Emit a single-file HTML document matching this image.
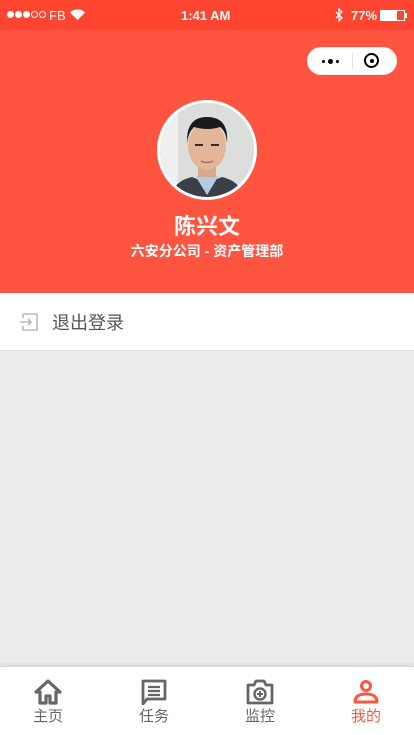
<!DOCTYPE html>
<html><head><meta charset="utf-8"><style>
*{margin:0;padding:0;box-sizing:border-box}
body{width:414px;height:735px;overflow:hidden;background:#ececec;font-family:"Liberation Sans","Noto Sans CJK SC",sans-serif;position:relative}
.status{position:absolute;top:0;left:0;width:414px;height:30px;background:#ff4530;color:#fff;font-size:13px;font-weight:bold}
.header{position:absolute;top:30px;left:0;width:414px;height:263px;background:#ff5540}
.capsule{position:absolute;left:307px;top:17px;width:90px;height:28px;border-radius:14px;background:#fff;border:1px solid #f0f0f0}
.avatar{position:absolute;left:157px;top:100px;width:100px;height:100px;border-radius:50%;border:3px solid #fff;overflow:hidden;background:#d9dbd8}
.name{position:absolute;top:209px;width:414px;text-align:center;color:#fff;font-size:22px;font-weight:bold}
.dept{position:absolute;top:241px;width:414px;text-align:center;color:#fff;font-size:14px;font-weight:bold}
.row{position:absolute;top:293px;left:0;width:414px;height:58px;background:#fff;border-bottom:1px solid #ddd}
.row span{position:absolute;left:52px;top:16px;font-size:18px;color:#555}
.tab{position:absolute;top:666px;left:0;width:414px;height:69px;background:#fff;border-top:1px solid #d8d8d8;box-shadow:0 -2px 3px rgba(0,0,0,.08)}
.ti{position:absolute;top:12px;width:60px;text-align:center;font-size:15px;color:#666}
.ti svg{display:block;margin:0 auto 0}
</style></head><body>
<div class="status">
 <div style="position:absolute;left:7px;top:11px;display:flex;gap:1px">
  <i style="width:7px;height:7px;border-radius:50%;background:#fff"></i><i style="width:7px;height:7px;border-radius:50%;background:#fff"></i><i style="width:7px;height:7px;border-radius:50%;background:#fff"></i><i style="width:7px;height:7px;border-radius:50%;border:1px solid #fff"></i><i style="width:7px;height:7px;border-radius:50%;border:1px solid #fff"></i>
 </div>
 <span style="position:absolute;left:49px;top:8px;font-weight:normal">FB</span>
 <svg style="position:absolute;left:70px;top:9px" width="15" height="11" viewBox="0 0 15 11"><path d="M7.5 11L0 3.5A10.5 10.5 0 0 1 15 3.5Z" fill="#fff"/></svg>
 <span style="position:absolute;left:181px;top:8px">1:41 AM</span>
 <svg style="position:absolute;left:335px;top:8px" width="9" height="14" viewBox="0 0 9 14"><path d="M1 4l6 6-3 3V1l3 3-6 6" fill="none" stroke="#fff" stroke-width="1.3"/></svg>
 <span style="position:absolute;left:351px;top:8px">77%</span>
 <div style="position:absolute;left:380px;top:10px;width:25px;height:11px;border:1px solid #fff"><div style="width:16px;height:9px;background:#fff"></div></div>
 <div style="position:absolute;left:405px;top:13px;width:2px;height:5px;background:#fff"></div>
</div>
<div class="header">
 <div class="capsule">
  <div style="position:absolute;left:14px;top:11px;display:flex;gap:3px;align-items:center"><i style="width:3px;height:3px;border-radius:50%;background:#000"></i><i style="width:5px;height:5px;border-radius:50%;background:#000"></i><i style="width:3px;height:3px;border-radius:50%;background:#000"></i></div>
  <div style="position:absolute;left:44px;top:5px;width:1px;height:17px;background:#e5e5e5"></div>
  <div style="position:absolute;left:56px;top:5px;width:15px;height:15px;border-radius:50%;border:2px solid #000"><div style="position:absolute;left:3.5px;top:3.5px;width:4px;height:4px;border-radius:50%;background:#000"></div></div>
 </div>
</div>
<div class="avatar">
 <svg width="94" height="94" viewBox="0 0 94 94">
  <rect width="94" height="94" fill="#dcdedb"/>
  <rect x="0" y="0" width="18" height="94" fill="#eef0ee"/>
  <path d="M10 94Q14 78 32 74L47 80L62 74Q80 78 84 94Z" fill="#3b3f47"/>
  <path d="M36 74L47 92L58 74L52 70H42Z" fill="#b7cbe0"/>
  <rect x="38" y="58" width="18" height="16" fill="#d8a88c"/>
  <ellipse cx="47" cy="43" rx="19" ry="24" fill="#e4b699"/>
  <path d="M27 40Q26 14 47 14Q69 14 67 40Q66 28 60 24Q48 28 34 24Q28 30 27 40Z" fill="#1c1a1a"/>
  <rect x="35" y="41" width="8" height="2" fill="#3a2a22"/><rect x="51" y="41" width="8" height="2" fill="#3a2a22"/>
  <path d="M41 58Q47 61 53 58" stroke="#a86a5a" stroke-width="1.5" fill="none"/>
 </svg>
</div>
<div class="name">陈兴文</div>
<div class="dept">六安分公司 - 资产管理部</div>
<div class="row">
 <svg style="position:absolute;left:19px;top:19px" width="20" height="20" viewBox="0 0 20 20"><path d="M4 2H18V18H4V14M4 6V2" fill="none" stroke="#bbb" stroke-width="1.6"/><path d="M1 10H12M9 7L12 10L9 13" fill="none" stroke="#bbb" stroke-width="1.6"/></svg>
 <span>退出登录</span>
</div>
<div class="tab">
 <div class="ti" style="left:18px"><svg width="28" height="26" viewBox="0 0 28 26"><path d="M14 2L2 13H6V24H12V17H16V24H22V13H26Z" fill="none" stroke="#666" stroke-width="3.2" stroke-linejoin="round"/></svg>主页</div>
 <div class="ti" style="left:124px"><svg width="28" height="26" viewBox="0 0 28 26"><path d="M3 2H25V20H7L3 25Z" fill="none" stroke="#666" stroke-width="2.8" stroke-linejoin="round"/><path d="M8 8H20M8 12H20M8 16H20" stroke="#666" stroke-width="2.2"/></svg>任务</div>
 <div class="ti" style="left:230px"><svg width="28" height="26" viewBox="0 0 28 26"><path d="M2 6H8L10 2H18L20 6H26V24H2Z" fill="none" stroke="#666" stroke-width="2.8" stroke-linejoin="round"/><circle cx="14" cy="15" r="5.5" fill="none" stroke="#666" stroke-width="2.4"/><path d="M11 15H17M14 12V18" stroke="#666" stroke-width="2"/></svg>监控</div>
 <div class="ti" style="left:336px;color:#ff5540"><svg width="28" height="26" viewBox="0 0 28 26"><circle cx="14" cy="7" r="4.5" fill="none" stroke="#ff5540" stroke-width="3"/><path d="M3 23Q3 15 14 15Q25 15 25 23Z" fill="none" stroke="#ff5540" stroke-width="3" stroke-linejoin="round"/></svg>我的</div>
</div>
</body></html>
